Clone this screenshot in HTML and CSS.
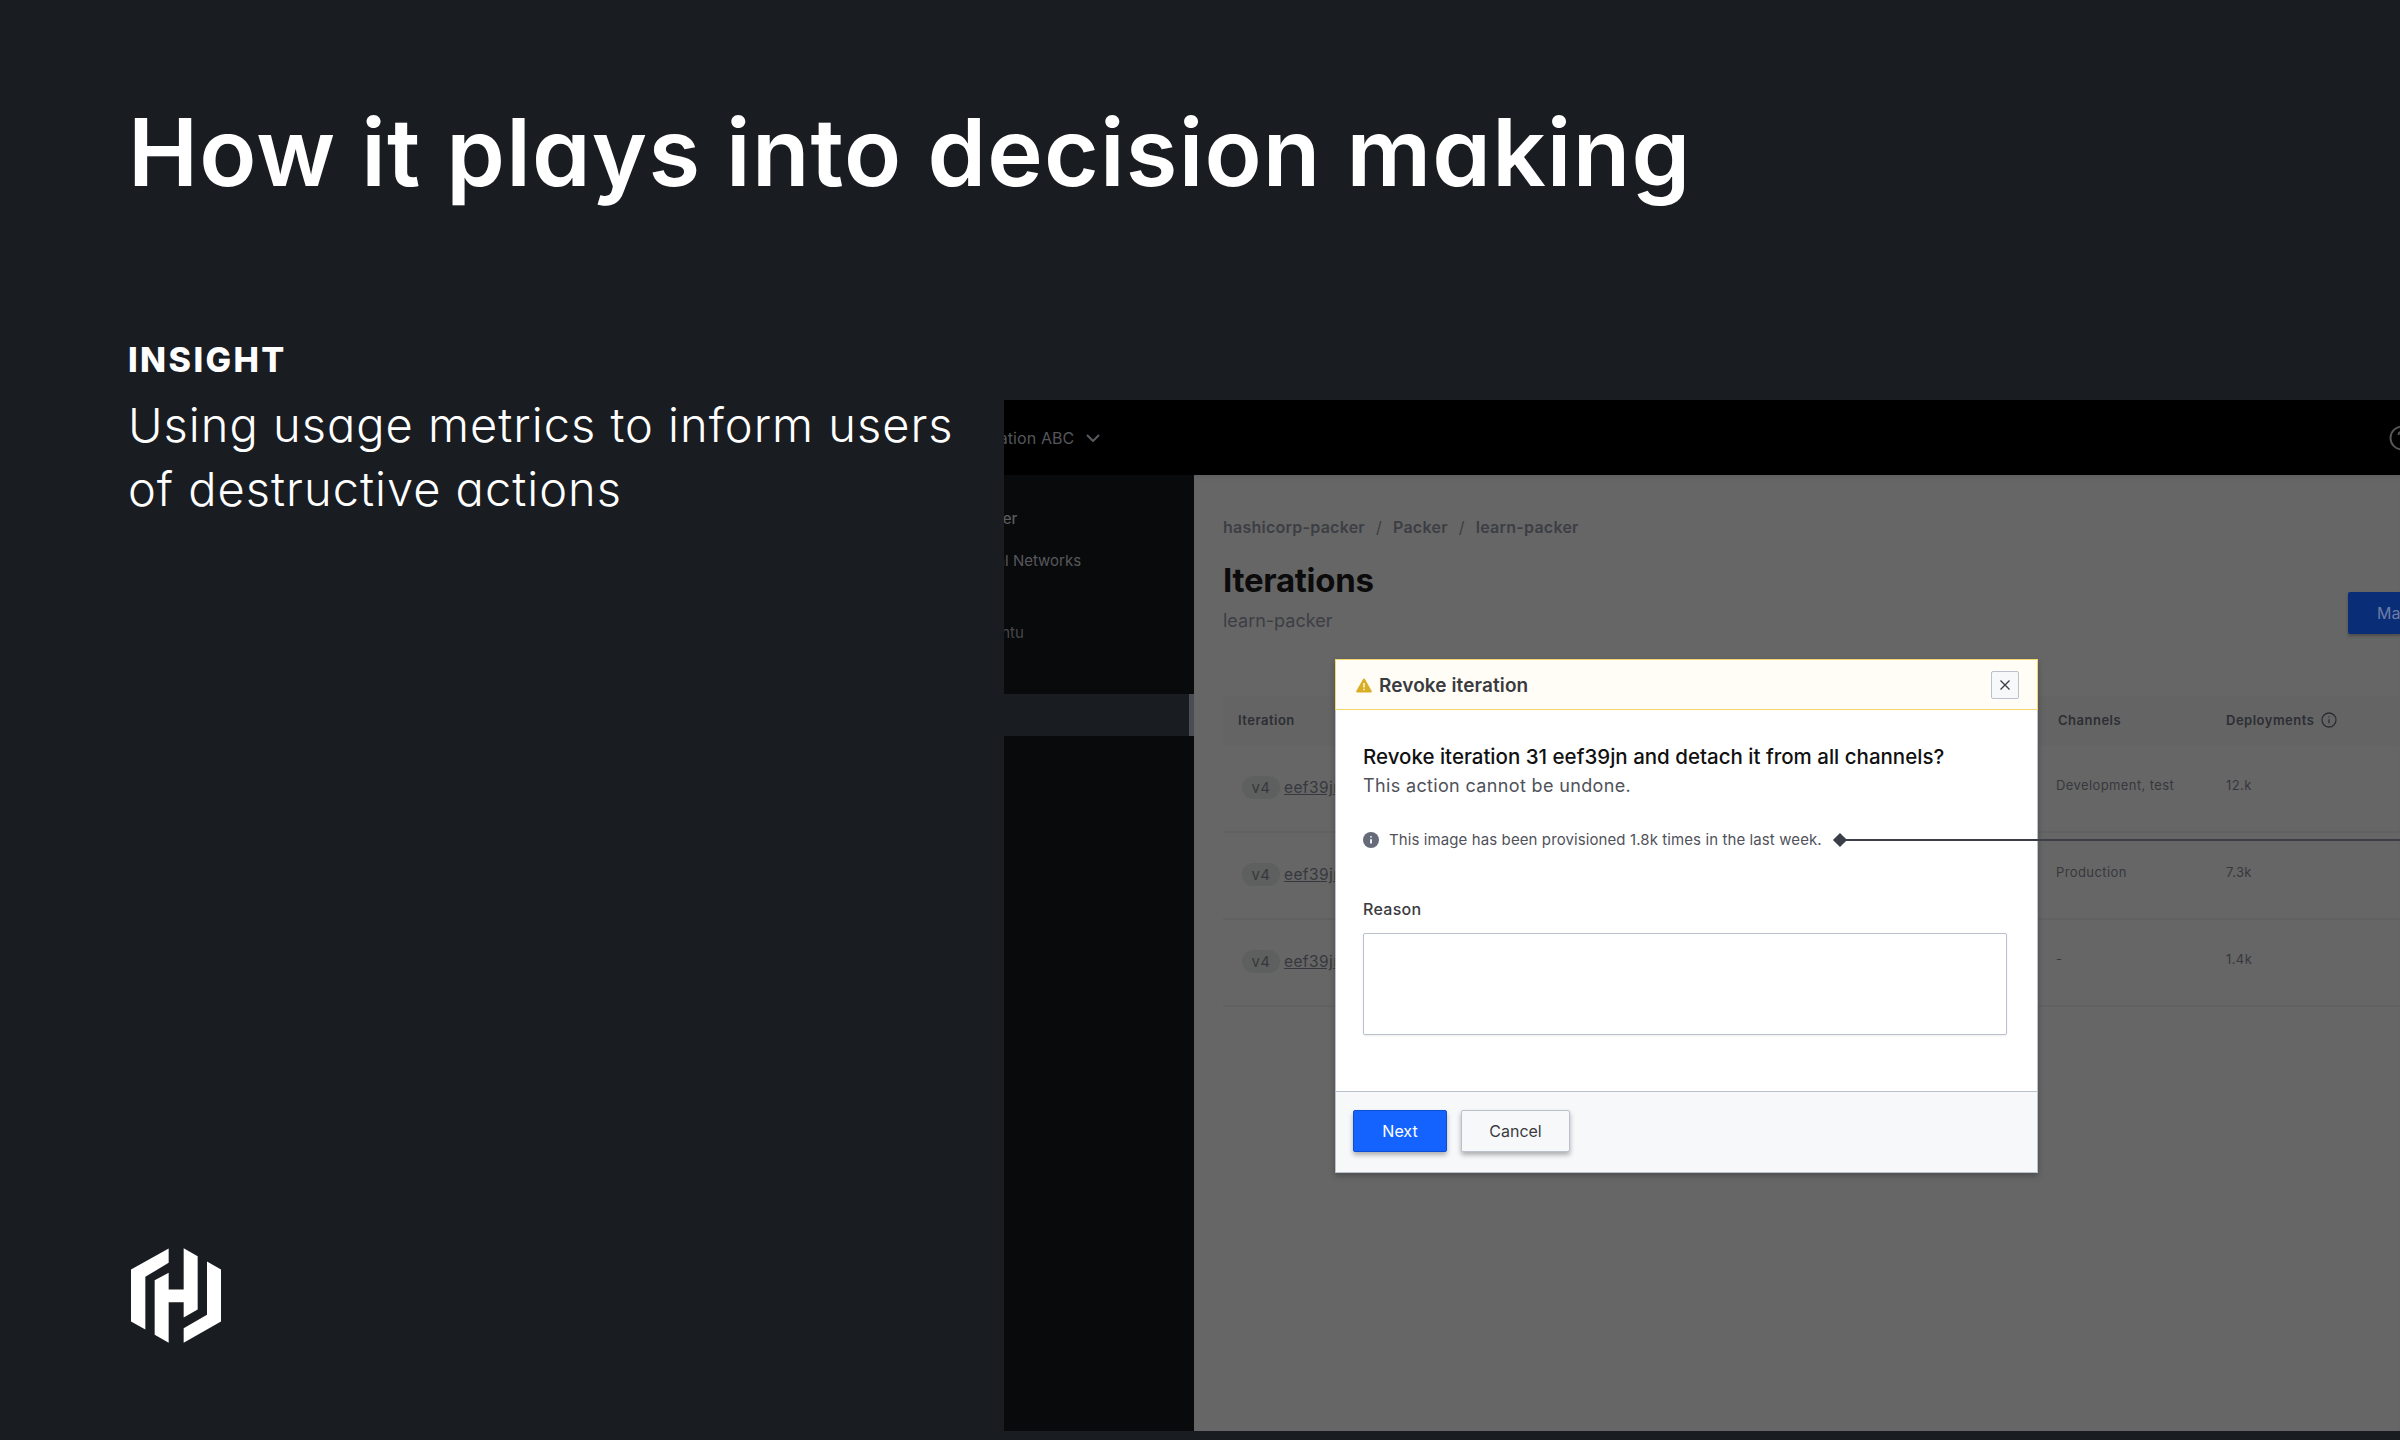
FILE: index.html
```html
<!DOCTYPE html>
<html lang="en">
<head>
<meta charset="utf-8">
<title>How it plays into decision making</title>
<link rel="stylesheet" href="styles.css">
</head>
<body>
<div class="slide">
  <section class="intro">
    <h1 class="title">How it plays into decision making</h1>
    <h2 class="eyebrow">INSIGHT</h2>
    <p class="lede">Using usage metrics to inform users<br>of destructive actions</p>
    <svg class="logo" viewBox="92 84 270 284" aria-label="HashiCorp">
      <path d="M92 148 205 85V128L135 170V328L92 304Z"/>
      <path d="M163 180 205 158V208H250V84L292 108V268L250 292V246H205V368L163 344Z"/>
      <path d="M320 124 362 148V304L250 368V324L320 284Z"/>
    </svg>
  </section>
  <section class="app">
    <header class="topbar">
      <span class="org">Organization ABC</span>
      <svg class="chev" viewBox="0 0 14 8"><path d="M1 1l6 6 6-6"/></svg>
      <svg class="help" viewBox="0 0 26 26"><circle cx="13" cy="13" r="11.5"/><path d="M9.5 10a3.5 3.5 0 1 1 5 3.2c-1 .6-1.5 1.2-1.5 2.3"/></svg>
    </header>
    <div class="app-body">
      <nav class="sidebar">
        <div class="nav-top">
          <span class="nav-item nav-a">Packer</span>
          <span class="nav-item nav-b">Virtual Networks</span>
          <span class="nav-item nav-c">Ubuntu</span>
        </div>
        <div class="nav-active"></div>
      </nav>
      <main class="main">
        <div class="crumbs"><span>hashicorp-packer</span><i>/</i><span>Packer</span><i>/</i><span>learn-packer</span></div>
        <div class="page-head">
          <div>
            <h2 class="page-title">Iterations</h2>
            <p class="page-sub">learn-packer</p>
          </div>
          <span class="primary">Manage</span>
        </div>
        <div class="table">
          <div class="row head">
            <span class="c-iter">Iteration</span>
            <span class="c-chan">Channels</span>
            <span class="c-dep">Deployments
              <svg class="info-o" viewBox="0 0 16 16"><circle cx="8" cy="8" r="7"/><path d="M8 7.2v4M8 4.400v1.200"/></svg>
            </span>
          </div>
          <div class="row"><span class="c-iter"><b class="pill">v4</b><u>eef39jn</u></span><span>Development, test</span><span>12.k</span></div>
          <div class="row"><span class="c-iter"><b class="pill">v4</b><u>eef39jn</u></span><span>Production</span><span>7.3k</span></div>
          <div class="row"><span class="c-iter"><b class="pill">v4</b><u>eef39jn</u></span><span>-</span><span>1.4k</span></div>
        </div>
        <div class="modal">
          <div class="modal-head">
            <svg class="warn" viewBox="0 0 16 15"><path d="M8 .5a1 1 0 0 1 .9.5l6.8 12a1 1 0 0 1-.9 1.5H1.200a1 1 0 0 1-.9-1.500L7.100 1A1 1 0 0 1 8 .5Z"/><path class="warn-mark" d="M7.300 5h1.400v4.600H7.300ZM7.300 10.800h1.400v1.400H7.300Z"/></svg>
            <span class="modal-title">Revoke iteration</span>
            <span class="close"><svg viewBox="0 0 12 12"><path d="M1.500 1.500l9 9M10.500 1.500l-9 9"/></svg></span>
          </div>
          <div class="modal-body">
            <h3 class="q">Revoke iteration 31 eef39jn and detach it from all channels?</h3>
            <p class="q-sub">This action cannot be undone.</p>
            <div class="note">
              <svg class="info-f" viewBox="0 0 16 16"><circle cx="8" cy="8" r="8"/><path d="M8 7.200v4.300M8 4.200v1.400"/></svg>
              <span>This image has been provisioned 1.8k times in the last week.</span>
            </div>
            <label class="field-label" for="reason">Reason</label>
            <textarea class="field" id="reason"></textarea>
          </div>
          <div class="modal-foot">
            <span class="btn btn-next">Next</span>
            <span class="btn btn-cancel">Cancel</span>
          </div>
        </div>
      </main>
    </div>
    <div class="callout"><span class="diamond"></span><span class="callout-line"></span></div>
  </section>
</div>
</body>
</html>
```
FILE: styles.css
```css
* { box-sizing: border-box; }
html, body { margin: 0; padding: 0; }
body { background: #191c21; font-family: Inter, "Liberation Sans", sans-serif; }
h1, h2, h3, p { margin: 0; font-weight: inherit; }

.slide { display: flex; width: 2400px; height: 1440px; overflow: hidden; background: #191c21; }

.intro { display: flex; flex-direction: column; flex: 0 0 1004px; min-width: 0; padding: 94px 0 97px 128px; color: #fff; font-feature-settings: "cv11" 1; }
.title { font-size: 94px; line-height: 116px; font-weight: 600; letter-spacing: 1.2px; white-space: nowrap; }
.eyebrow { margin-top: 128px; font-size: 34px; line-height: 44px; font-weight: 800; letter-spacing: 2.4px; }
.lede { margin-top: 11px; font-size: 47px; line-height: 64px; font-weight: 300; letter-spacing: 1px; white-space: nowrap; }
.logo { display: block; width: 90px; height: 95px; margin-top: auto; margin-left: 3px; fill: #fff; }

.app { position: relative; display: flex; flex-direction: column; flex: 1; min-width: 0; margin: 400px 0 9px; overflow: hidden; }
.topbar { position: relative; display: flex; align-items: center; flex: 0 0 75px; background: #000; color: #55565a; font-size: 16px; }
.org { margin-left: -65px; letter-spacing: .1px; white-space: nowrap; }
.chev { width: 14px; height: 8px; margin-left: 12px; fill: none; stroke: #5a5b5f; stroke-width: 2; }
.help { position: absolute; top: 25px; left: 1385px; width: 26px; height: 26px; fill: none; stroke: #55565a; stroke-width: 2; }

.app-body { display: flex; flex: 1; min-height: 0; }
.sidebar { display: flex; flex-direction: column; flex: 0 0 190px; background: #090a0c; color: #57585c; font-size: 15px; overflow: hidden; }
.nav-top { position: relative; flex: 0 0 219px; }
.nav-item { position: absolute; white-space: nowrap; line-height: 20px; }
.nav-a { top: 34px; left: -36px; color: #5a5b5f; font-weight: 500; }
.nav-b { top: 76px; left: -41px; }
.nav-c { top: 148px; left: -32px; color: #46474b; }
.nav-active { flex: 0 0 42px; background: #191c21; border-right: 5px solid #4a4d55; }

.main { position: relative; flex: 1; min-width: 0; padding: 40px 0 0 29px; background: #666; color: #3c3e44; box-shadow: inset 0 6px 6px -6px #5a5a5a; }
.crumbs { display: flex; align-items: center; gap: 11px; font-size: 16px; line-height: 24px; font-weight: 600; letter-spacing: .25px; white-space: nowrap; }
.crumbs i { font-style: normal; font-weight: 400; }
.page-head { display: flex; justify-content: space-between; width: 1300px; margin-top: 21px; }
.page-title { font-size: 33px; line-height: 40px; font-weight: 700; letter-spacing: -.3px; color: #0b0b0c; }
.page-sub { margin-top: 9px; font-size: 18px; line-height: 24px; }
.primary { display: flex; align-items: center; width: 175px; height: 42px; margin-top: 32px; padding-left: 29px; background: #0a2d78; border-radius: 2px; box-shadow: 0 2px 3px #4c4c4c; color: #6c7da5; font-size: 16px; }

.table { width: 1300px; margin-top: 62px; font-size: 13px; color: #37383d; }
.row { display: grid; grid-template-columns: 833px 170px 1fr; align-items: center; height: 87px; padding-bottom: 8px; border-bottom: 2px solid #616161; letter-spacing: .4px; }
.row.head { height: 50px; padding-bottom: 3px; border: 0; background: #646464; font-weight: 600; letter-spacing: .5px; color: #2d2e33; }
.row.head .c-chan { padding-left: 2px; }
.c-iter { display: flex; align-items: center; padding-top: 6px; }
.head .c-iter { padding-top: 0; padding-left: 15px; }
.pill { display: flex; align-items: center; justify-content: center; width: 38px; height: 23px; margin: 0 4px 0 19px; border-radius: 12px; background: #5e605f; font-weight: 400; font-size: 15px; }
.row u { font-size: 15.500px; }
.c-dep { display: flex; align-items: center; gap: 7px; }
.info-o { width: 16px; height: 16px; fill: none; stroke: #2d2e33; stroke-width: 1.300; }

.modal { position: absolute; top: 184px; left: 141px; display: flex; flex-direction: column; width: 703px; height: 514px; background: #fff; box-shadow: 0 3px 6px rgba(0,0,0,.25); }
.modal-head { display: flex; align-items: center; flex: 0 0 51px; padding: 1px 18px 0 20px; background: #fffdf6; border: 1px solid #f5d56d; }
.warn { width: 16px; height: 15px; fill: #d9ae24; }
.warn-mark { fill: #fffdf6; }
.modal-title { margin-left: 7px; font-size: 19px; font-weight: 600; letter-spacing: .1px; color: #3a3b41; }
.close { display: flex; align-items: center; justify-content: center; width: 28px; height: 28px; margin-left: auto; background: #f7f8fa; border: 1px solid #bac1cc; border-radius: 2px; }
.close svg { width: 12px; height: 12px; fill: none; stroke: #3a3b41; stroke-width: 1.300; }

.modal-body { flex: 1; padding: 33px 30px 0 27px; border: solid #bac1cc; border-width: 0 1px; }
.q { font-size: 20.500px; line-height: 28px; font-weight: 500; color: #111; white-space: nowrap; }
.q-sub { margin-top: 3px; font-size: 18px; line-height: 24px; letter-spacing: .35px; color: #50525a; }
.note { display: flex; align-items: center; gap: 10px; margin-top: 30px; font-size: 15px; line-height: 24px; letter-spacing: .1px; color: #50525a; }
.info-f { width: 16px; height: 16px; fill: #666b7a; }
.info-f path { fill: none; stroke: #fff; stroke-width: 1.800; }
.field-label { display: block; margin-top: 45px; font-size: 16px; line-height: 24px; font-weight: 500; letter-spacing: .3px; color: #3a3b41; }
.field { display: block; width: 644px; height: 102px; margin-top: 12px; padding: 8px; background: #fff; border: 1px solid #bac1cc; border-radius: 2px; resize: none; box-shadow: 0 1px 2px rgba(0,0,0,.08); }

.modal-foot { display: flex; align-items: center; gap: 14px; flex: 0 0 82px; padding: 0 17px 3px; background: #f7f8fa; border: 1px solid #bac1cc; }
.btn { display: flex; align-items: center; justify-content: center; height: 42px; border-radius: 2px; font-size: 16px; }
.btn-next { width: 94px; background: #1563ff; border: 1px solid #0c4fd0; color: #fff; box-shadow: 0 3px 5px rgba(0,0,0,.3); }
.btn-cancel { width: 109px; background: #f7f8fa; border: 1px solid #bac1cc; color: #3a3b41; box-shadow: 0 3px 5px rgba(0,0,0,.3); }

.callout { position: absolute; top: 433px; left: 829px; right: 0; display: flex; align-items: center; height: 14px; }
.diamond { flex: 0 0 10px; height: 10px; margin: 0 1px 0 2px; background: #3b3e46; transform: rotate(45deg); }
.callout-line { flex: 1; height: 2px; background: #3b3e46; }
```
